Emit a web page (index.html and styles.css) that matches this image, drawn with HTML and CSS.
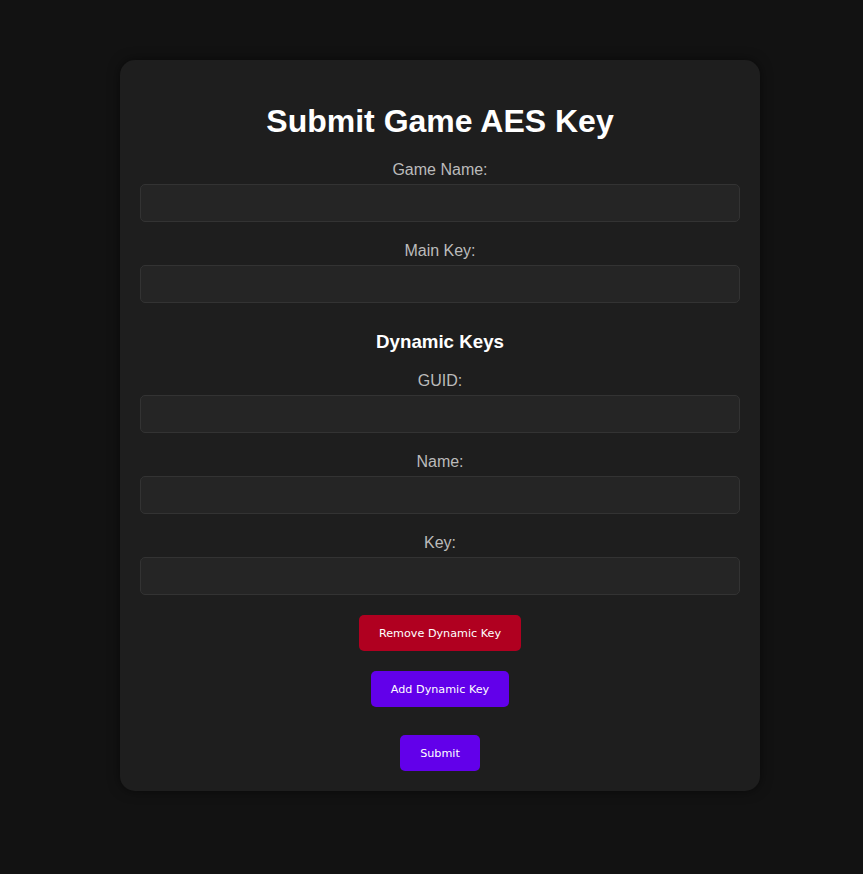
FILE: index.html
```html
<!DOCTYPE html>
<html>
<head>
<meta charset="utf-8">
<link rel="stylesheet" href="styles.css">
</head>
<body>
<div class="card">
  <h1 class="title">Submit Game AES Key</h1>
  <form class="form">
    <label class="label">Game Name:</label>
    <input class="input" type="text">
    <label class="label">Main Key:</label>
    <input class="input" type="text">
    <h3 class="subtitle">Dynamic Keys</h3>
    <label class="label">GUID:</label>
    <input class="input" type="text">
    <label class="label">Name:</label>
    <input class="input" type="text">
    <label class="label">Key:</label>
    <input class="input" type="text">
    <div class="actions">
      <button type="button" class="btn btn-danger">Remove Dynamic Key</button>
      <button type="button" class="btn btn-primary">Add Dynamic Key</button>
      <button type="button" class="btn btn-primary btn-submit">Submit</button>
    </div>
  </form>
</div>
</body>
</html>
```
FILE: styles.css
```css
html, body {
  margin: 0;
  padding: 0;
  background: #121212;
  font-family: "Liberation Sans", Arial, sans-serif;
  color: #fff;
}
body {
  padding: 60px 0 84px 17px;
}
.card {
  width: 600px;
  margin: 0 auto;
  padding: 20px;
  background: #1e1e1e;
  border-radius: 15px;
  box-shadow: 0 0 12px rgba(0,0,0,0.5);
  text-align: center;
}
.title {
  font-size: 32px;
  font-weight: bold;
  margin: 23px 0 21px;
  line-height: 37px;
}
.form {
  display: flex;
  flex-direction: column;
}
.label {
  display: block;
  font-size: 16px;
  line-height: 18px;
  color: #bbbbbb;
  margin-bottom: 5px;
}
.input {
  box-sizing: border-box;
  width: 100%;
  height: 38px;
  margin: 0 0 20px;
  padding: 10px;
  background: #252525;
  border: 1px solid #333;
  border-radius: 5px;
  color: #fff;
  font-size: 16px;
  outline: none;
}
.subtitle {
  font-size: 18.72px;
  font-weight: bold;
  line-height: 22px;
  margin: 8px 0 19px;
}
.actions {
  display: flex;
  flex-direction: column;
  align-items: center;
  gap: 20px;
}
.btn {
  border: none;
  border-radius: 5px;
  height: 36px;
  padding: 0 20px;
  color: #fff;
  font-family: "DejaVu Sans", sans-serif;
  font-size: 11.2px;
  cursor: pointer;
}
.btn-danger {
  background: #b00020;
}
.btn-primary {
  background: #6200ea;
}
.btn-submit {
  margin-top: 8px;
}
```
